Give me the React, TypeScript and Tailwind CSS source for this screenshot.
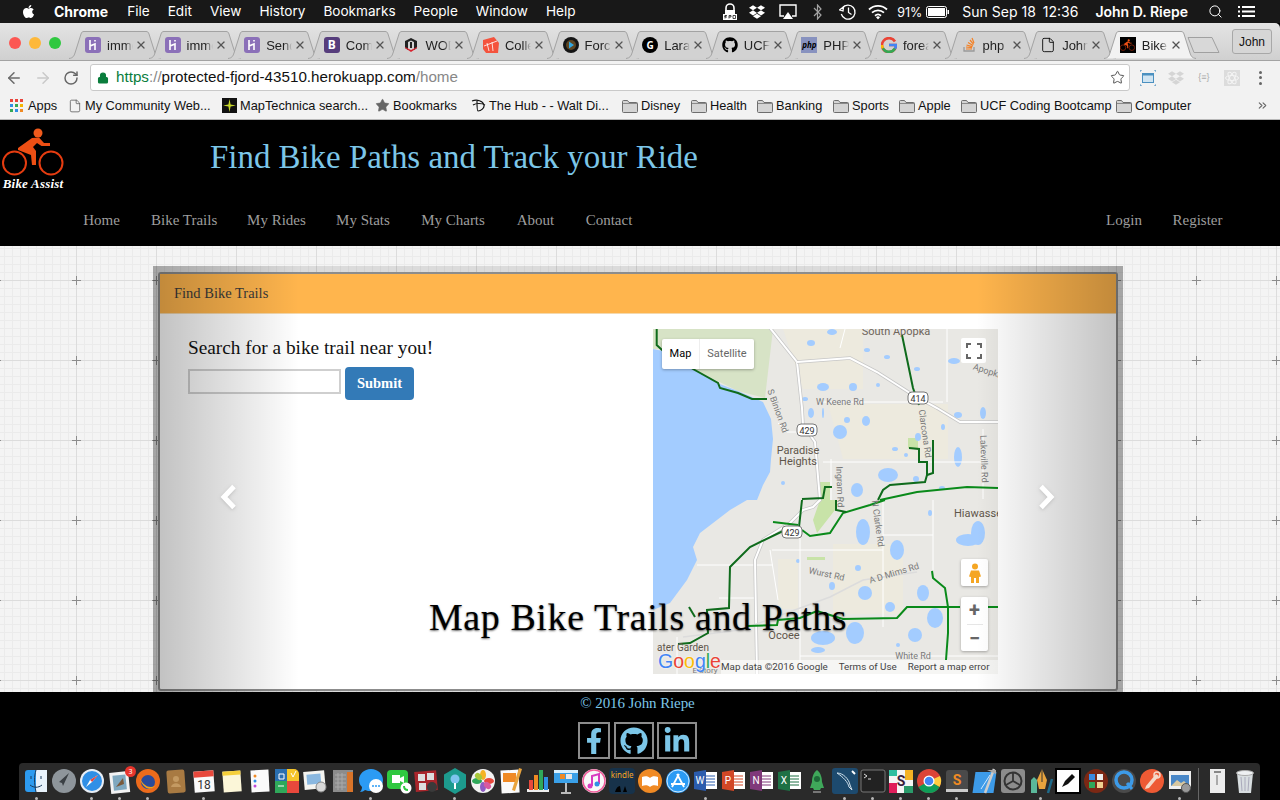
import React from "react";
import {
  ArrowLeft,
  ArrowRight,
  RotateCw,
  Lock,
  Star,
  Search,
  X,
  File,
  ChevronsRight,
} from "lucide-react";
import { FaFacebookF, FaGithub, FaLinkedinIn, FaApple, FaDropbox } from "react-icons/fa";

const Folder = () => (
  <svg width="16" height="14" viewBox="0 0 16 14" className="shrink-0">
    <path d="M.5 2.5a1 1 0 0 1 1-1h4l1.5 2h7.5a1 1 0 0 1 1 1v8a1 1 0 0 1-1 1h-13a1 1 0 0 1-1-1z" fill="#d4d4d4" stroke="#6e6e6e" />
    <path d="M1 4.5h14" stroke="#8a8a8a" />
  </svg>
);

const Heroku = () => (
  <svg width="16" height="16" viewBox="0 0 16 16">
    <rect width="16" height="16" rx="3" fill="#8b70b8" />
    <path d="M5 3v10M5 9l5-2v6M10 3v1.5" stroke="#fff" strokeWidth="1.6" fill="none" />
  </svg>
);

const BikeLogo = ({ w = 62, h = 48 }: { w?: number; h?: number }) => (
  <svg width={w} height={h} viewBox="0 0 62 48">
    <circle cx="12.5" cy="35" r="11.5" fill="none" stroke="#e63c10" strokeWidth="2" />
    <circle cx="49" cy="35" r="11.5" fill="none" stroke="#e63c10" strokeWidth="2" />
    <circle cx="36" cy="5" r="4.5" fill="#f05a1c" />
    <path d="M30 10 L37 9.5 L42 15 L48 15 L48 18 L39.5 18 L35 15 L31 19 L34 23 L34 37 L30 37 L29 27 L16 22 L16 20 Z" fill="#ee4f14" />
  </svg>
);

const favicons: React.ReactNode[] = [
  <Heroku />,
  <Heroku />,
  <Heroku />,
  <span className="flex h-4 w-4 items-center justify-center rounded-[3px] bg-[#563d7c] text-[12px] font-bold text-white">B</span>,
  <svg width="16" height="16" viewBox="0 0 16 16">
    <path d="M8 1l6 3v7l-3 2V5L8 3.5 5 5v8l-3-2V4z" fill="#222" />
    <path d="M2 11l3 2 3 2 3-2 3-2v-1l-6 3-6-3z" fill="#d8232f" />
    <path d="M7 5h2v6H7z" fill="#222" />
  </svg>,
  <svg width="16" height="16" viewBox="0 0 16 16">
    <path d="M0 3l11-3 5 6-1 10H3L0 12z" fill="#f4533d" />
    <path d="M1 9l13-5M6 14L4 6M10 14l-1-9" stroke="#fff" strokeWidth=".8" />
  </svg>,
  <svg width="16" height="16" viewBox="0 0 16 16">
    <circle cx="8" cy="8" r="8" fill="#151515" />
    <circle cx="8" cy="8" r="5" fill="#e8a33d" opacity=".35" />
    <path d="M6 4.5l5 3.5-5 3.5z" fill="#35a8e0" />
  </svg>,
  <span className="flex h-4 w-4 items-center justify-center rounded-full bg-black text-[10px] font-bold text-white">G</span>,
  <FaGithub className="h-4 w-4 text-black" />,
  <span className="flex h-4 w-4 items-center justify-center bg-[#8892bf] text-[8px] font-bold italic text-black">php</span>,
  <svg width="16" height="16" viewBox="0 0 16 16">
    <path d="M14 4.5A7 7 0 1 0 15 8H8" fill="none" stroke="#ea4335" strokeWidth="2.6" />
    <path d="M1.8 11.2A7 7 0 0 0 14 11.5" fill="none" stroke="#34a853" strokeWidth="2.6" />
    <path d="M8 8h7a7 7 0 0 1-1 3.5" fill="none" stroke="#4285f4" strokeWidth="2.6" />
    <path d="M1 8a7 7 0 0 0 .8 3.2" fill="none" stroke="#fbbc05" strokeWidth="2.6" />
  </svg>,
  <svg width="16" height="16" viewBox="0 0 16 16">
    <path d="M3 10v4h10v-4" fill="none" stroke="#9a9a9a" strokeWidth="1.3" />
    <path d="M5 12h6M5 10l6 .6M5.5 8l6 1.6M7 5.5l5 3M9 3l3.6 4.4M11 1l2 5" stroke="#f48024" strokeWidth="1.2" />
  </svg>,
  <File className="h-4 w-4 text-black" strokeWidth={1.3} />,
  <span className="flex h-4 w-4 items-center justify-center bg-black">
    <BikeLogo w={15} h={12} />
  </span>,
];

const tabs = ["imme", "imme", "Send", "Com", "WOD", "Colle", "Forc", "Lara", "UCF-", "PHP:", "forea", "php", "John", "Bike"];

const Tab = ({ label, icon, active }: { label: string; icon: React.ReactNode; active: boolean }) => (
  <div className="relative h-[28px] w-[79.6px] shrink-0">
    <svg width="92" height="28" viewBox="0 0 92 28" className={`absolute left-0 top-0 ${active ? "z-10" : ""}`}>
      <path
        d="M0 27.5 C4 27 5 25 6 22 L12 3 C12.6 1 13.5.5 15 .5 H77 C78.5.5 79.4 1 80 3 L86 22 C87 25 88 27 92 27.5"
        fill={active ? "#f2f2f2" : "#d2d2d2"}
        stroke="#a3a3a3"
      />
    </svg>
    <div className="absolute left-[16px] top-[6px] z-20 flex h-[16px] w-[16px] items-center justify-center">{icon}</div>
    <div className="absolute left-[38px] top-[6px] z-20 w-[26px] overflow-hidden whitespace-nowrap font-['Liberation_Sans',sans-serif] text-[13px] leading-[18px] text-[#222] [mask-image:linear-gradient(to_right,black_70%,transparent)]">
      {label}
    </div>
    <X className="absolute left-[66px] top-[8px] z-20 h-[12px] w-[12px] text-[#555]" strokeWidth={2.6} />
  </div>
);

const MenuBar = () => (
  <div className="flex h-[23px] shrink-0 items-center bg-[#181818] pl-[21px] font-['Inter',sans-serif] text-[14px] text-white">
    <FaApple className="mr-[18px] h-[15px] w-[15px]" />
    <span className="mr-[19px] font-bold">Chrome</span>
    <div className="flex gap-[18px] text-[13.6px]">
      <span>File</span>
      <span>Edit</span>
      <span>View</span>
      <span>History</span>
      <span>Bookmarks</span>
      <span>People</span>
      <span>Window</span>
      <span>Help</span>
    </div>
    <div className="ml-auto flex items-center pr-[25px]">
      <svg width="16" height="18" viewBox="0 0 16 18" className="mr-[11px]">
        <path d="M4 8V5a4 4 0 0 1 8 0v3" fill="none" stroke="#fff" strokeWidth="1.6" />
        <rect x="3" y="7" width="10" height="4" fill="#fff" />
        <rect x="1" y="11" width="14" height="6" fill="#fff" />
        <path d="M3 12.5v3M5 12.5h-2v1.5h2M7 15.5v-3h2v1.5H7M11 12.5h2.5v3H11z" stroke="#000" strokeWidth=".7" fill="none" />
      </svg>
      <FaDropbox className="mr-[14px] h-[16px] w-[16px]" />
      <svg width="18" height="16" viewBox="0 0 18 16" className="mr-[16px]">
        <path d="M5 12H1V1h16v11h-4" fill="none" stroke="#fff" strokeWidth="1.4" />
        <path d="M9 8l5 7H4z" fill="#fff" />
      </svg>
      <svg width="10" height="16" viewBox="0 0 10 16" className="mr-[16px] opacity-60">
        <path d="M1 4l7 7-3.5 4V1L8 5l-7 7" fill="none" stroke="#fff" strokeWidth="1.2" />
      </svg>
      <svg width="18" height="18" viewBox="0 0 18 18" className="mr-[11px]">
        <path d="M3.4 5A7 7 0 1 1 2.3 11" fill="none" stroke="#fff" strokeWidth="1.3" />
        <path d="M.5 7l3.5 1 .5-4zM9.5 4.5V9.5L12.5 11.5" fill="none" stroke="#fff" strokeWidth="1.3" />
      </svg>
      <svg width="20" height="16" viewBox="0 0 20 16" className="mr-[9px]">
        <path d="M1 5.5a13 13 0 0 1 18 0M4 8.7a9 9 0 0 1 12 0M7 11.7a4.6 4.6 0 0 1 6 0" fill="none" stroke="#fff" strokeWidth="1.8" />
        <path d="M10 15.5l-2-2.3a3 3 0 0 1 4 0z" fill="#fff" />
      </svg>
      <span className="mr-[4px] mt-[3px] text-[12.5px]">91%</span>
      <svg width="23" height="12" viewBox="0 0 23 12" className="mr-[13px]">
        <rect x=".5" y=".5" width="20" height="11" rx="2" fill="none" stroke="#fff" />
        <rect x="2" y="2" width="17" height="8" fill="#fff" />
        <rect x="21.5" y="4" width="1.5" height="4" fill="#fff" />
      </svg>
      <span className="mr-[7px]">Sun Sep 18</span>
      <span className="mr-[17px]">12:36</span>
      <span className="mr-[20px] font-semibold">John D. Riepe</span>
      <Search className="mr-[15px] h-[15px] w-[15px]" strokeWidth={1.6} />
      <svg width="17" height="13" viewBox="0 0 17 13">
        <path d="M0 2h2M4 2h13M0 6.5h2M4 6.5h13M0 11h2M4 11h13" stroke="#fff" strokeWidth="1.8" />
      </svg>
    </div>
  </div>
);

const TabStrip = () => (
  <div className="relative flex h-[37px] shrink-0 items-end rounded-tr-[5px] bg-gradient-to-b from-[#e4e4e4] to-[#d0d0d0] pl-[69px]">
    <div className="absolute left-[9px] top-[14px] flex gap-[8px]">
      <span className="h-[12px] w-[12px] rounded-full bg-[#fc5753]" />
      <span className="h-[12px] w-[12px] rounded-full bg-[#fdb83a]" />
      <span className="h-[12px] w-[12px] rounded-full bg-[#2fc840]" />
    </div>
    <div className="flex pb-[1px]">
      {tabs.map((t, i) => (
        <Tab key={i} label={t} icon={favicons[i]} active={i === tabs.length - 1} />
      ))}
    </div>
    <svg width="34" height="16" viewBox="0 0 34 16" className="mb-[7px] ml-[4px] shrink-0">
      <path d="M1 .5h24l7 15H7z" fill="#d8d8d8" stroke="#a0a0a0" />
    </svg>
    <div className="absolute right-[8px] top-[6px] flex h-[25px] w-[40px] items-center justify-center rounded-[3px] border border-[#a8a8a8] bg-[#d6d6d6] font-['Liberation_Sans',sans-serif] text-[12px] text-[#111]">
      John
    </div>
  </div>
);

const Toolbar = () => (
  <div className="flex h-[34px] shrink-0 items-center border-t border-[#a3a3a3] bg-[#f2f2f2] pl-[5px] font-['Liberation_Sans',sans-serif]">
    <ArrowLeft className="mr-[11px] h-[18px] w-[18px] text-[#6b6b6b]" strokeWidth={2} />
    <ArrowRight className="mr-[11px] h-[18px] w-[18px] text-[#c9c9c9]" strokeWidth={2} />
    <RotateCw className="mr-[11px] h-[16px] w-[16px] text-[#666]" strokeWidth={2.2} />
    <div className="flex h-[27px] w-[1040px] items-center rounded-[3px] border border-[#c9c9c9] bg-white pl-[6px] pr-[4px] text-[15.2px]">
      <Lock className="mr-[7px] h-[12px] w-[12px] text-[#0a7d3c]" fill="#0a7d3c" strokeWidth={2.2} />
      <span className="text-[#0a7d3c]">https</span>
      <span className="text-[#888]">://</span>
      <span className="text-[#111]">protected-fjord-43510.herokuapp.com</span>
      <span className="text-[#888]">/home</span>
      <Star className="ml-auto h-[15px] w-[15px] text-[#555]" strokeWidth={1.6} />
    </div>
    <div className="ml-[10px] flex items-center gap-[12px]">
      <svg width="16" height="16" viewBox="0 0 16 16">
        <rect x="2.5" y="3.5" width="11" height="9" fill="#cfe4f2" stroke="#4a90c0" />
        <rect x="3" y="3" width="10" height="2.5" fill="#4a90c0" />
        <path d="M0 2V0h2M14 0h2v2M0 14v2h2M14 16h2v-2" stroke="#4a90c0" fill="none" />
      </svg>
      <FaDropbox className="h-[16px] w-[16px] text-[#d5d5d5]" />
      <span className="w-[16px] text-center text-[9px] text-[#aaa]">{"{≡}"}</span>
      <span className="flex h-[16px] w-[16px] items-center justify-center bg-[#dcdcdc]">
        <svg width="14" height="14" viewBox="0 0 14 14" fill="none" stroke="#f4f4f4">
          <ellipse cx="7" cy="7" rx="6.5" ry="2.5" />
          <ellipse cx="7" cy="7" rx="6.5" ry="2.5" transform="rotate(60 7 7)" />
          <ellipse cx="7" cy="7" rx="6.5" ry="2.5" transform="rotate(120 7 7)" />
        </svg>
      </span>
      <span className="flex w-[16px] flex-col items-center gap-[2.5px]">
        <span className="h-[3px] w-[3px] rounded-full bg-[#666]" />
        <span className="h-[3px] w-[3px] rounded-full bg-[#666]" />
        <span className="h-[3px] w-[3px] rounded-full bg-[#666]" />
      </span>
    </div>
  </div>
);

const BookmarkItem = ({ icon, label, className }: { icon: React.ReactNode; label: string; className: string }) => (
  <div className={`flex shrink-0 items-center gap-[3px] whitespace-nowrap ${className}`}>
    {icon}
    <span>{label}</span>
  </div>
);

const appsGrid = [
  "bg-[#e8453c]", "bg-[#e8453c]", "bg-[#e8453c]",
  "bg-[#2f8fe6]", "bg-[#34a853]", "bg-[#f4b400]",
  "bg-[#34a853]", "bg-[#2f8fe6]", "bg-[#f08a24]",
];

const BookmarksBar = () => (
  <div className="flex h-[26px] shrink-0 items-center border-b border-[#b8b8b8] bg-[#f2f2f2] pb-[2px] pl-[10px] font-['Liberation_Sans',sans-serif] text-[12.8px] text-[#111]">
    <BookmarkItem
      className="w-[58px]"
      label="Apps"
      icon={
        <span className="mr-[2px] grid h-[13px] w-[13px] shrink-0 grid-cols-3 gap-[1.5px]">
          {appsGrid.map((c, i) => (
            <span key={i} className={c} />
          ))}
        </span>
      }
    />
    <BookmarkItem className="w-[154px]" label="My Community Web..." icon={<File className="h-[14px] w-[14px] text-[#555]" strokeWidth={1.3} />} />
    <BookmarkItem
      className="w-[153px]"
      label="MapTechnica search..."
      icon={
        <svg width="15" height="15" viewBox="0 0 14 14" className="shrink-0">
          <rect width="14" height="14" fill="#111" />
          <path d="M7 1l1 5 5 1-5 1-1 5-1-5-5-1 5-1z" fill="#c8d82a" />
        </svg>
      }
    />
    <BookmarkItem className="w-[96px]" label="Bookmarks" icon={<Star className="h-[15px] w-[15px] text-[#666]" fill="#666" strokeWidth={1} />} />
    <BookmarkItem
      className="w-[151px]"
      label="The Hub - - Walt Di..."
      icon={
        <svg width="15" height="14" viewBox="0 0 15 14" className="shrink-0" fill="none" stroke="#111" strokeWidth="1.2">
          <path d="M1 2c5-2 11 0 12 4 .6 3-3 6-6 6-1 0-1-7-1-10M2 6c3-2 9-2 12 0" />
        </svg>
      }
    />
    <BookmarkItem className="w-[69px]" label="Disney" icon={<Folder />} />
    <BookmarkItem className="w-[66px]" label="Health" icon={<Folder />} />
    <BookmarkItem className="w-[76px]" label="Banking" icon={<Folder />} />
    <BookmarkItem className="w-[66px]" label="Sports" icon={<Folder />} />
    <BookmarkItem className="w-[62px]" label="Apple" icon={<Folder />} />
    <BookmarkItem className="w-[155px]" label="UCF Coding Bootcamp" icon={<Folder />} />
    <BookmarkItem className="w-[140px]" label="Computer" icon={<Folder />} />
    <ChevronsRight className="h-[13px] w-[13px] text-[#666]" strokeWidth={2} />
  </div>
);

// cx, cy, rx, ry in map pixels, read off the zoomed reference
const lakes = [
  [179, 3, 5, 3], [158, 14, 4, 3], [214, 21, 3, 2], [234, 28, 3, 2], [264, 40, 3, 2], [301, 32, 6, 3], [170, 58, 6, 4], [200, 58, 4, 4],
  [225, 56, 2, 2], [152, 70, 3, 2], [158, 84, 3, 5], [170, 84, 1, 5], [187, 103, 7, 7], [213, 92, 4, 5], [194, 91, 3, 3], [242, 120, 3, 2],
  [253, 126, 2, 2], [265, 108, 3, 4], [305, 128, 4, 10], [305, 86, 4, 3], [330, 84, 3, 6], [290, 98, 2, 3], [235, 146, 10, 7], [204, 161, 6, 7],
  [263, 150, 3, 3], [289, 159, 3, 2], [130, 154, 2, 2], [210, 203, 7, 13], [244, 221, 7, 10], [277, 184, 2, 3], [315, 211, 12, 6], [325, 204, 7, 12],
  [270, 264, 6, 8], [212, 264, 7, 7], [237, 278, 5, 5], [179, 257, 3, 4], [282, 289, 8, 10], [262, 306, 7, 7], [202, 304, 9, 11], [170, 309, 12, 7],
  [165, 321, 7, 3], [205, 239, 3, 3], [245, 316, 2, 2], [145, 232, 2, 2],
];

const greens: [string, string][] = [
  ["M3.7 -1 L3.7 16 L9 21 L40 40 L65 54 L67 59 L85 64 L99 70 L114 70", "#0f6b1c"],
  ["M249 6 L260 59 L266 76", "#0f6b1c"],
  ["M280 111 L280 144 L274 146 L274 133 L266 133 L266 120 L256 119", "#0f6b1c"],
  ["M274 146 L272 153 L237 156 L230 161 L225 171", "#0f6b1c"],
  ["M227 171 L264 163 L314 158 L345 159", "#0a8a1a"],
  ["M149 170 L170 169 L172 158 L179 158", "#0f6b1c"],
  ["M149 171 L146 198 L130 202 L97 218 L77 238 L76 279 L54 281 L55 304 L37 314 L25 315", "#0f6b1c"],
  ["M36 278 L42 288", "#0f6b1c"],
  ["M120 193 L145 196", "#0a8a1a"],
  ["M149 201 L157 207 L177 204 L190 184 L217 176 L232 171", "#0a8a1a"],
  ["M183 171 L183 181 L193 183", "#0f6b1c"],
  ["M94 297 L124 296 L125 291 L147 289 L164 282 L177 286 L190 290 L244 289 L254 278 L307 278", "#0a8a1a"],
  ["M335 278 L345 278", "#0a8a1a"],
  ["M279 242 L280 249 L292 259 L295 278 L295 304 L293 331", "#0a8a1a"],
];

const Shield = ({ x, y, t }: { x: number; y: number; t: string }) => (
  <g>
    <rect x={x - 10} y={y - 6} width="20" height="12" rx="4" fill="#fff" stroke="#777" />
    <text x={x} y={y + 3.5} textAnchor="middle" fontSize="9" fill="#333" fontFamily="Roboto, sans-serif">
      {t}
    </text>
  </g>
);

const MapLabel = ({ x, y, t, s = 9, c = "#7a7a7a", r = 0 }: { x: number; y: number; t: string; s?: number; c?: string; r?: number }) => (
  <text x={x} y={y} fontSize={s} fill={c} textAnchor="middle" fontFamily="Roboto, sans-serif" transform={r ? `rotate(${r} ${x} ${y})` : undefined}>
    {t}
  </text>
);

const HIGHWAYS = [
  "M117 -1 L144 33 L149 79 L150 96 L162 113 L167 171 L160 178 L150 181 L137 194 L110 211 L102 231 L104 345",
  "M144 33 L197 29 L224 43 L260 66 L284 79 L307 93 L345 93",
];

const TrailMap = () => (
  <div className="relative h-[345px] w-[345px] shrink-0 overflow-hidden font-['Roboto',sans-serif]">
    <svg width="345" height="345" viewBox="0 0 345 345">
      <rect width="345" height="345" fill="#e9e8e4" />
      <path d="M130 0h80v60h-60zM175 75h120v55H190zM180 215h70v70h-70zM125 230h20v50h-20z" fill="#edeade" />
      <path d="M0 0H120L112 69 85 62 40 40 10 20H0z" fill="#d7e3c6" />
      <path d="M0 20 10 22 40 40 64 54 85 62 110 73 118 90 120 110 118 130 117 143 110 156 104 171 94 171 77 181 47 204 40 218 44 231 34 251 17 274 0 281z" fill="#a3ccff" />
      <path d="M167 153h10v18h7l-2 10-18 23-4-13 7-20zM154 228h18v3h-18zM255 109h10v10h-10z" fill="#c8e3a8" />
      {lakes.map(([x, y, rx, ry], i) => (
        <ellipse key={i} cx={x} cy={y} rx={rx} ry={ry} fill="#a3ccff" />
      ))}
      <g fill="none" stroke="#fff" strokeWidth="1">
        <path d="M294 0V73M164 73H290M170 133H330M44 236H120M66 269H104M119 221H230M230 206H280M280 171V241M230 171V298M147 204V338M147 327H345M24 308V345M117 221L125 271M125 94L134 103H144M187 19L192 0M178 130V171M330 100V170" />
      </g>
      <g fill="none">
        {HIGHWAYS.map((d) => (
          <g key={d}>
            <path d={d} stroke="#c6c6c6" strokeWidth="3.5" />
            <path d={d} stroke="#fff" strokeWidth="2" />
          </g>
        ))}
        <path d="M30 308 L87 301 L177 268 L210 251 L264 243" stroke="#dcdcdc" strokeWidth="1.5" />
      </g>
      {greens.map(([d, c], i) => (
        <path key={i} d={d} fill="none" stroke={c} strokeWidth="2" />
      ))}
      <MapLabel x={243} y={6} t="South Apopka" s={11} c="#6e655a" />
      <MapLabel x={187} y={76} t="W Keene Rd" />
      <MapLabel x={122} y={83} t="S Binion Rd" r={70} />
      <MapLabel x={269} y={105} t="Clarcona Rd" r={82} />
      <MapLabel x={328} y={130} t="Lakeville Rd" r={88} />
      <MapLabel x={334} y={45} t="Apopka" r={18} />
      <MapLabel x={145} y={125} t="Paradise" s={11} c="#5f564b" />
      <MapLabel x={145} y={136} t="Heights" s={11} c="#5f564b" />
      <MapLabel x={184} y={158} t="Ingram Rd" r={88} />
      <MapLabel x={222} y={195} t="N Clarke Rd" r={82} />
      <MapLabel x={325} y={188} t="Hiawasse" s={11} c="#5f564b" />
      <MapLabel x={173} y={248} t="Wurst Rd" r={12} />
      <MapLabel x={242} y={247} t="A D Mims Rd" r={-17} />
      <MapLabel x={131} y={310} t="Ocoee" s={11} c="#5f564b" />
      <MapLabel x={30} y={322} t="ater Garden" s={10} c="#5f564b" />
      <MapLabel x={260} y={330} t="White Rd" />
      <MapLabel x={52} y={344} t="E Story" s={8} />
      <Shield x={265} y={69} t="414" />
      <Shield x={154} y={101} t="429" />
      <Shield x={139} y={203} t="429" />
    </svg>

    {/* map controls */}
    <div className="absolute left-[9px] top-[10px] flex h-[30px] w-[92px] items-center rounded-[2px] bg-white text-[11px] shadow-[0_1px_3px_rgba(0,0,0,.3)]">
      <span className="flex h-full w-[38px] items-center justify-center border-r border-[#eee] text-black">Map</span>
      <span className="flex-1 text-center text-[#666]">Satellite</span>
    </div>
    <div className="absolute left-[308px] top-[9px] flex h-[25px] w-[25px] items-center justify-center rounded-[2px] bg-white">
      <svg width="16" height="16" viewBox="0 0 16 16" fill="none" stroke="#666" strokeWidth="2">
        <path d="M1 5V1h4M11 1h4v4M15 11v4h-4M5 15H1v-4" />
      </svg>
    </div>
    <div className="absolute left-[308px] top-[230px] flex h-[27px] w-[27px] items-center justify-center rounded-[2px] bg-white shadow-[0_1px_3px_rgba(0,0,0,.3)]">
      <svg width="12" height="20" viewBox="0 0 12 20">
        <circle cx="6" cy="3.5" r="3" fill="#f5a623" />
        <path d="M2 7.5h8l2 6-2 .5v6H7v-5H5v5H2v-6l-2-.5z" fill="#f5a623" />
      </svg>
    </div>
    <div className="absolute left-[308px] top-[268px] flex h-[54px] w-[27px] flex-col items-center rounded-[2px] bg-white text-[20px] font-bold leading-[26px] text-[#666] shadow-[0_1px_3px_rgba(0,0,0,.3)]">
      <span className="h-[27px]">+</span>
      <span className="h-px w-[16px] bg-[#e6e6e6]" />
      <span className="h-[26px]">−</span>
    </div>
    <div className="absolute bottom-0 right-0 flex h-[14px] w-[277px] items-center gap-[11px] whitespace-nowrap bg-white/60 text-[9.8px] leading-none text-[#444]">
      <span>Map data ©2016 Google</span>
      <span>Terms of Use</span>
      <span>Report a map error</span>
    </div>
    <div className="absolute bottom-[2px] left-[5px] font-['Liberation_Sans',sans-serif] text-[19.5px] leading-[22px] [text-shadow:0_0_2px_#fff]">
      <span className="text-[#4285f4]">G</span>
      <span className="text-[#ea4335]">o</span>
      <span className="text-[#fbbc05]">o</span>
      <span className="text-[#4285f4]">g</span>
      <span className="text-[#34a853]">l</span>
      <span className="text-[#ea4335]">e</span>
    </div>
  </div>
);

const Carousel = () => (
  <div className="relative ml-[153px] mt-[20px] h-[426px] w-[970px] bg-black/10 px-[5px] pt-[6px] font-['Liberation_Serif',serif]">
    <div className="flex h-[419px] flex-col rounded-[3px] border-2 border-[#8c8c8c] bg-white">
      <div className="flex h-[40px] shrink-0 items-center border-b border-[#f5d9ad] bg-[#ffb54d] pl-[14px] text-[14.5px] text-[#3a3a3a]">
        Find Bike Trails
      </div>
      <div className="flex flex-1 pl-[28px] pt-[15px]">
        <div className="w-[465px] shrink-0">
          <div className="mt-[7px] text-[19.3px] leading-[24px] text-[#111]">Search for a bike trail near you!</div>
          <div className="mt-[7px] flex items-start">
            <input className="mt-[2px] h-[25px] w-[153px] border-2 border-[#cfcfcf] bg-white" aria-label="Search" />
            <button className="ml-[4px] h-[33px] w-[69px] rounded-[4px] bg-[#337ab7] text-[14.5px] font-bold text-white">Submit</button>
          </div>
        </div>
        <TrailMap />
      </div>
    </div>

    {/* carousel controls */}
    <div className="absolute inset-y-0 left-0 flex w-[146px] items-center justify-center bg-gradient-to-r from-black/25 to-transparent pl-[5px]">
      <svg width="20" height="26" viewBox="0 0 20 26" className="mt-[35px] drop-shadow">
        <path d="M15 2.5 L5 13 L15 23.5" fill="none" stroke="#fff" strokeWidth="5" />
      </svg>
    </div>
    <div className="absolute inset-y-0 right-0 flex w-[146px] items-center justify-center bg-gradient-to-l from-black/25 to-transparent pr-[8px]">
      <svg width="20" height="26" viewBox="0 0 20 26" className="mt-[35px] drop-shadow">
        <path d="M5 2.5 L15 13 L5 23.5" fill="none" stroke="#fff" strokeWidth="5" />
      </svg>
    </div>
    <div className="absolute inset-x-0 top-[328px] text-center text-[38px] leading-[46px] tracking-[.6px] text-black [text-shadow:0_1px_2px_rgba(0,0,0,.6)]">
      Map Bike Trails and Paths
    </div>
  </div>
);

const GridBackdrop = () => (
  <svg className="absolute inset-0 h-full w-full" aria-hidden="true">
    <defs>
      <pattern id="sitegrid" x="36" y="-6" width="80" height="80" patternUnits="userSpaceOnUse">
        <rect width="80" height="80" fill="#f4f4f4" />
        <path
          d="M.5 0V80M8.5 0V80M16.5 0V80M24.5 0V80M32.5 0V80M48.5 0V80M56.5 0V80M64.5 0V80M72.5 0V80M0 .5H80M0 8.5H80M0 16.5H80M0 24.5H80M0 32.5H80M0 48.5H80M0 56.5H80M0 64.5H80M0 72.5H80"
          stroke="#ebebeb"
        />
        <path d="M40.5 0V80M0 40.5H80" stroke="#dcdcdc" />
        <path d="M36 40.5H45M40.5 36V45" stroke="#8c8c8c" />
      </pattern>
    </defs>
    <rect width="100%" height="100%" fill="url(#sitegrid)" />
  </svg>
);

const SiteHeader = () => (
  <header className="h-[126px] shrink-0 bg-black font-['Liberation_Serif',serif]">
    <div className="flex h-[80px] items-start">
      <div className="ml-[2px] mt-[8px] w-[62px]">
        <BikeLogo />
        <div className="mt-[1px] whitespace-nowrap text-center text-[13px] font-bold italic leading-[14px] tracking-[.2px] text-white">Bike Assist</div>
      </div>
      <h1 className="ml-[146px] mt-[17px] whitespace-nowrap text-[32.9px] leading-[40px] text-[#7cc6e8]">Find Bike Paths and Track your Ride</h1>
    </div>
    <nav className="flex h-[46px] items-center whitespace-nowrap pb-[6px] pl-[82px] pr-[57px] text-[15px] text-[#9d9d9d]">
      <div className="flex gap-[30px] text-center">
        <span className="w-[39px]">Home</span>
        <span className="w-[66px]">Bike Trails</span>
        <span className="w-[59px]">My Rides</span>
        <span className="w-[54px]">My Stats</span>
        <span className="w-[66px]">My Charts</span>
        <span className="w-[39px]">About</span>
        <span className="w-[48px]">Contact</span>
      </div>
      <div className="ml-auto flex gap-[30px] text-center">
        <span className="w-[36px]">Login</span>
        <span className="w-[51px]">Register</span>
      </div>
    </nav>
  </header>
);

const SocialBox = ({ className, children }: { className: string; children: React.ReactNode }) => (
  <div className={`flex h-[37px] items-center justify-center border-2 border-[#8c8c8c] text-[#7cc6e8] ${className}`}>{children}</div>
);

const SiteFooter = () => (
  <footer className="flex h-[108px] shrink-0 flex-col items-center bg-black pr-[5px] font-['Liberation_Serif',serif]">
    <div className="mt-[1px] text-[15px] leading-[20px] tracking-[-.1px] text-[#7cc6e8]">© 2016 John Riepe</div>
    <div className="mt-[9px] flex gap-[3.5px]">
      <SocialBox className="w-[32px]">
        <FaFacebookF className="h-[26px] w-[26px]" />
      </SocialBox>
      <SocialBox className="w-[40px]">
        <FaGithub className="h-[28px] w-[28px]" />
      </SocialBox>
      <SocialBox className="w-[40px]">
        <FaLinkedinIn className="h-[28px] w-[28px]" />
      </SocialBox>
    </div>
  </footer>
);

const OfficeTile = ({ bg, letter }: { bg: string; letter: string }) => (
  <svg width="25" height="25" viewBox="0 0 25 25">
    <rect x="9" y="4" width="15" height="17" fill="#fff" />
    <path d="M13 8h9M13 11h9M13 14h9M13 17h9" stroke={bg} strokeWidth="1" />
    <path d="M1 4l12-2v21L1 21z" fill={bg} />
    <text x="7" y="16" textAnchor="middle" fontSize="10" fill="#fff" fontFamily="Roboto, sans-serif">
      {letter}
    </text>
  </svg>
);

const s = (children: React.ReactNode) => (
  <svg width="26" height="26" viewBox="0 0 26 26">
    {children}
  </svg>
);

const dockIcons: { icon: React.ReactNode; dot?: boolean }[] = [
  { dot: true, icon: s(<><rect x="2" y="2" width="22" height="22" rx="3" fill="#2d9bf0" /><path d="M13 2h11v22H13z" fill="#e8f2fb" /><path d="M13 2c-2 7-2 12 0 22" stroke="#1a3a5c" fill="none" /><path d="M8 8v3M18 8v3M7 17c4 3 8 3 12 0" stroke="#1a3a5c" fill="none" /></>) },
  { icon: s(<><circle cx="13" cy="13" r="12" fill="#8e959b" /><path d="M18 5L8 14l3 1 1 3z" fill="#3a3f44" /></>) },
  { dot: true, icon: s(<><circle cx="13" cy="13" r="12" fill="#e8eef5" /><circle cx="13" cy="13" r="10" fill="#2f8fe6" /><path d="M19 7l-8 5 2 2z" fill="#fff" /><path d="M19 7l-6 7-2-2z" fill="#e8453c" /><path d="M7 19l6-5-2-2z" fill="#fff" /></>) },
  { dot: true, icon: <div className="relative">{s(<><rect x="3" y="4" width="19" height="21" transform="rotate(-6 13 13)" fill="#f2f2f2" /><rect x="6" y="7" width="13" height="15" transform="rotate(-6 13 13)" fill="#7fa8bf" /><path d="M9 19l7-9 1 6z" fill="#7a5a3c" /></>)}<span className="absolute -right-[3px] -top-[2px] flex h-[11px] w-[11px] items-center justify-center rounded-full bg-[#e8352c] text-[7px] leading-none text-white">3</span></div> },
  { dot: true, icon: s(<><circle cx="13" cy="13" r="12" fill="#ec6b1c" /><circle cx="13" cy="14" r="7" fill="#2a4a9a" /><path d="M4 8c2 6 6 11 12 11 4 0 6-3 7-6-2 8-14 14-19-5z" fill="#f4a21a" /></>) },
  { icon: s(<><rect x="4" y="2" width="18" height="23" rx="2" transform="rotate(-4 13 13)" fill="#a87a42" /><circle cx="13" cy="11" r="3" fill="#c49a62" /><path d="M8 19c1-5 9-5 10 0z" fill="#c49a62" /></>) },
  { dot: true, icon: s(<><rect x="3" y="3" width="20" height="21" transform="rotate(-4 13 13)" fill="#fafafa" /><rect x="3" y="3" width="20" height="6" transform="rotate(-4 13 13)" fill="#e8483c" /><text x="13" y="21" textAnchor="middle" fontSize="12" fill="#333" fontFamily="Roboto, sans-serif">18</text></>) },
  { icon: s(<><rect x="4" y="3" width="18" height="21" transform="rotate(-4 13 13)" fill="#fbf6d8" /><rect x="4" y="3" width="18" height="4" transform="rotate(-4 13 13)" fill="#f5cf3a" /></>) },
  { icon: s(<><rect x="4" y="2" width="18" height="22" transform="rotate(-3 13 13)" fill="#fafafa" /><circle cx="8" cy="8" r="1.5" fill="#f08a24" /><circle cx="8" cy="13" r="1.5" fill="#2f8fe6" /><circle cx="8" cy="18" r="1.5" fill="#c04ad8" /></>) },
  { icon: s(<><rect x="1" y="1" width="24" height="24" rx="5" fill="#f5c52a" /><path d="M1 1h12v12H1z" fill="#2a6fb0" /><path d="M1 13h12v12H1z" fill="#2fa85a" /><path d="M13 13h12v12H13z" fill="#e8483c" /><path d="M5 6h5v5H5zM4 18h6" stroke="#fff" fill="none" /><path d="M17 5l2 4 3-6" stroke="#fff" fill="none" /></>) },
  { icon: s(<><rect x="2" y="3" width="21" height="18" transform="rotate(-5 13 13)" fill="#f4f4f0" /><rect x="5" y="6" width="14" height="10" transform="rotate(-5 13 13)" fill="#8ab8e0" /><circle cx="19" cy="19" r="5" fill="#d8d8d8" stroke="#888" /></>) },
  { icon: s(<><rect x="3" y="2" width="20" height="22" fill="#8c8c8c" /><rect x="17" y="4" width="6" height="20" fill="#d8742a" /><path d="M5 7h11M5 11h11M5 15h11M5 19h11M8 5v17M12 5v17" stroke="#aaa" /></>) },
  { dot: true, icon: s(<><path d="M13 1c7 0 12 5 12 11s-5 11-12 11c-2 0-4 0-6-1-1 1-3 2-5 2 1-1 2-3 2-5-2-2-3-4-3-7C1 6 6 1 13 1z" fill="#2b9bf4" /><circle cx="18" cy="18" r="7" fill="#fff" /><circle cx="15" cy="18" r="1" fill="#2b9bf4" /><circle cx="18" cy="18" r="1" fill="#2b9bf4" /><circle cx="21" cy="18" r="1" fill="#2b9bf4" /></>) },
  { icon: s(<><rect x="1" y="2" width="21" height="19" rx="4" fill="#2fc840" /><path d="M6 7h8v8H6zM14 10l4-2v7l-4-2z" fill="#fff" /><circle cx="20" cy="20" r="5.5" fill="#fff" /><path d="M18 18c0 3 2 4 4 4" stroke="#2fc840" strokeWidth="2" fill="none" /></>) },
  { icon: s(<><rect x="1" y="3" width="22" height="20" transform="rotate(-5 13 13)" fill="#a8262c" /><rect x="4" y="6" width="7" height="7" fill="#ddd" /><rect x="13" y="5" width="7" height="7" fill="#ddd" /><rect x="5" y="15" width="7" height="7" fill="#ddd" /><circle cx="18" cy="19" r="5" fill="#3a3a3a" /></>) },
  { dot: true, icon: s(<><path d="M13 0l11 6.5v13L13 26 2 19.5v-13z" fill="#1d9b8e" /><circle cx="13" cy="11" r="4.5" fill="#7ec4ee" /><path d="M13 15v6" stroke="#fff" strokeWidth="2" /></>) },
  { icon: s(<><circle cx="13" cy="13" r="12" fill="#f2f2f2" /><ellipse cx="13" cy="7" rx="3" ry="5" fill="#f5b324" /><ellipse cx="13" cy="19" rx="3" ry="5" fill="#8f5cc4" /><ellipse cx="7" cy="13" rx="5" ry="3" fill="#2fa85a" /><ellipse cx="19" cy="13" rx="5" ry="3" fill="#e8483c" /><ellipse cx="8.5" cy="8.5" rx="3" ry="4" transform="rotate(-45 8.5 8.5)" fill="#a8c83a" /><ellipse cx="17.5" cy="17.5" rx="3" ry="4" transform="rotate(-45 17.5 17.5)" fill="#d85aa0" /></>) },
  { icon: s(<><rect x="3" y="2" width="18" height="23" transform="rotate(-3 13 13)" fill="#fafafa" /><rect x="5" y="5" width="13" height="9" fill="#f08a24" /><path d="M21 0l3 1-7 22-3-1z" fill="#e8a33d" /></>) },
  { icon: s(<><rect x="2" y="21" width="22" height="3" fill="#eee" /><rect x="4" y="12" width="4" height="10" fill="#e8483c" /><rect x="9" y="7" width="4" height="15" fill="#f08a24" /><rect x="14" y="2" width="4" height="20" fill="#2fa85a" /><rect x="19" y="9" width="4" height="13" fill="#2f8fe6" /></>) },
  { icon: s(<><rect x="1" y="2" width="24" height="13" fill="#3aa0e8" /><rect x="1" y="2" width="24" height="3" fill="#d8f0ff" /><rect x="7" y="6" width="5" height="5" fill="#f08a24" /><rect x="13" y="6" width="6" height="5" fill="#e8e8e8" /><path d="M13 15v9M8 25h10" stroke="#bbb" strokeWidth="2" /></>) },
  { icon: s(<><circle cx="13" cy="13" r="12" fill="#f8f8f8" /><circle cx="13" cy="13" r="11" fill="none" stroke="#f05a9a" strokeWidth="1.5" /><path d="M11 18V8l7-2v10" stroke="#d83ac0" strokeWidth="2" fill="none" /><circle cx="9" cy="18" r="2.5" fill="#d83ac0" /><circle cx="16" cy="16" r="2.5" fill="#2f8fe6" /></>) },
  { icon: <div className="flex h-[26px] w-[26px] flex-col items-center rounded-[4px] bg-[#17324a] text-[8px] leading-[14px] text-[#f5a623]">kindle<svg width="18" height="10" viewBox="0 0 18 10"><path d="M2 10c1-4 3-6 5-6l1 6zM10 10l2-6 2 6z" fill="#000" /></svg></div> },
  { icon: s(<><circle cx="13" cy="13" r="12" fill="#f08a24" /><path d="M5 9c3-1 6-1 8 1 2-2 5-2 8-1v9c-3-1-6-1-8 1-2-2-5-2-8-1z" fill="#fff" /></>) },
  { icon: s(<><circle cx="13" cy="13" r="12" fill="#2b9bf4" /><circle cx="13" cy="13" r="11" fill="none" stroke="#cfe8ff" /><path d="M7 19L14 6M19 19L12 6M6 16h14" stroke="#fff" strokeWidth="1.8" fill="none" /></>) },
  { dot: true, icon: <OfficeTile bg="#2b5cad" letter="W" /> },
  { icon: <OfficeTile bg="#d24726" letter="P" /> },
  { icon: <OfficeTile bg="#80397b" letter="N" /> },
  { icon: <OfficeTile bg="#1e7145" letter="X" /> },
  { icon: s(<><path d="M13 2c4 3 5 8 5 12l2 6h-3l-1 2H10l-1-2H6l2-6c0-4 1-9 5-12z" fill="#3fa85a" /><circle cx="13" cy="11" r="3" fill="#1d6a38" /><path d="M9 24h8" stroke="#777" strokeWidth="2" /></>) },
  { dot: true, icon: s(<><rect x="0" y="0" width="26" height="26" rx="3" fill="#1d4a6e" /><path d="M5 5c6 0 12 6 13 12l2 5-3-3c-1-5-6-10-12-14z" fill="none" stroke="#cfe0ec" /><path d="M20 3l3 3" stroke="#fff" strokeWidth="2" /></>) },
  { dot: true, icon: s(<><rect x="1" y="2" width="24" height="22" rx="2" fill="#222" stroke="#777" /><path d="M4 6l3 2-3 2M8 11h3" stroke="#ddd" fill="none" /></>) },
  { dot: true, icon: s(<><rect x="1" y="2" width="24" height="23" fill="#f5f5f5" /><path d="M1 2h8v6H1z" fill="#2fbfa0" /><path d="M17 2h8v10h-8z" fill="#f5b324" /><path d="M1 15h8v10H1z" fill="#e01e5a" /><path d="M16 18h9v7h-9z" fill="#2a9a6a" /><text x="13" y="18" textAnchor="middle" fontSize="14" fontWeight="bold" fill="#3a1d3a" fontFamily="Roboto, sans-serif">S</text></>) },
  { dot: true, icon: s(<><circle cx="13" cy="13" r="12" fill="#db4437" /><path d="M13 13L24 8A12 12 0 0 1 23.5 19z" fill="#ffcd40" /><path d="M13 25a12 12 0 0 1-10.5-6L13 13l10.5 6A12 12 0 0 1 13 25z" fill="#0f9d58" /><circle cx="13" cy="13" r="5.5" fill="#fff" /><circle cx="13" cy="13" r="4.3" fill="#4285f4" /></>) },
  { dot: true, icon: s(<><rect x="2" y="2" width="22" height="21" rx="3" fill="#4a4a4a" /><rect x="2" y="21" width="22" height="3" fill="#ccc" /><text x="13" y="17" textAnchor="middle" fontSize="14" fontWeight="bold" fill="#f08a24" fontFamily="Roboto, sans-serif">S</text></>) },
  { icon: s(<><rect x="1" y="4" width="21" height="21" transform="skewX(-8) translate(3 0)" fill="#3d9be8" /><path d="M9 21L18 7" stroke="#cfe8ff" /><path d="M22 1l-9 24" stroke="#ccc" strokeWidth="2.5" /><path d="M15 2l9 0 0 4z" fill="#aaa" /></>) },
  { icon: s(<><rect x="1" y="1" width="24" height="24" rx="3" fill="#8c8c8c" /><circle cx="13" cy="13" r="8.5" fill="none" stroke="#333" strokeWidth="2" /><path d="M13 13V5M13 13l7 4M13 13l-7 4" stroke="#333" strokeWidth="1.8" /></>) },
  { dot: true, icon: s(<><path d="M3 25V12l3-3 3 3v13z" fill="#5bb89a" /><path d="M14 1l5 11-2 9h-6l-2-9z" fill="#e8a33d" /><path d="M14 1v13" stroke="#333" /><path d="M20 25l4-14" stroke="#1e6a8a" strokeWidth="2.5" /></>) },
  { icon: s(<><rect x="1" y="1" width="24" height="24" fill="#fff" stroke="#000" strokeWidth="2" /><path d="M7 19l3-6 7-7 3 3-7 7z" fill="#111" /></>) },
  { icon: s(<><circle cx="13" cy="13" r="12" fill="#7c2814" /><rect x="6" y="6" width="6" height="6" fill="#3a8ae0" /><rect x="14" y="6" width="6" height="6" fill="#eee" /><rect x="6" y="14" width="6" height="6" fill="#2fa85a" /><rect x="14" y="14" width="6" height="6" fill="#f0d090" /></>) },
  { icon: s(<><circle cx="13" cy="13" r="12" fill="#4a4a4a" /><circle cx="13" cy="12" r="8" fill="none" stroke="#3d9be8" strokeWidth="3.5" /><path d="M16 15l5 6" stroke="#3d9be8" strokeWidth="3" /></>) },
  { icon: s(<><circle cx="13" cy="13" r="12" fill="#ee5a34" /><path d="M6 21l4-1 10-12-3-2L7 18z" fill="#f4d9c8" /><circle cx="18" cy="7" r="3" fill="none" stroke="#f4d9c8" strokeWidth="1.5" /></>) },
  { dot: true, icon: s(<><rect x="2" y="3" width="22" height="18" fill="#f0f0f0" /><rect x="4" y="7" width="18" height="11" fill="#4a88c8" /><path d="M4 18l6-6 4 3 3-2 5 5z" fill="#d8c8a0" /><circle cx="19" cy="20" r="4.5" fill="#9a9a9a" stroke="#555" /></>) },
];

const Dock = () => (
  <div className="absolute bottom-0 left-[19px] flex h-[37px] w-[1241px] items-start rounded-t-[4px] bg-[#2a2a2a] pl-[3.5px] pt-[5px]">
    {dockIcons.map((d, i) => (
      <div key={i} className="relative flex h-[32px] w-[27.9px] shrink-0 justify-center">
        {d.icon}
        {d.dot && <span className="absolute bottom-0 left-[12px] h-[3px] w-[3px] rounded-full bg-[#b8b8b8]" />}
      </div>
    ))}
    <div className="mx-[4px] h-[32px] w-px shrink-0 bg-[#666]" />
    <div className="flex w-[27.9px] shrink-0 justify-center">
      {s(<><rect x="6" y="1" width="15" height="24" fill="#ececec" /><rect x="10" y="3" width="7" height="2" fill="#888" /><path d="M12 7h2v10h-2z" fill="#aaa" /></>)}
    </div>
    <div className="flex w-[27.9px] shrink-0 justify-center">
      {s(<><path d="M5 5h16l-2 20H7z" fill="#d8dde0" /><ellipse cx="13" cy="5" rx="8.5" ry="2.5" fill="#eef0f2" stroke="#aaa" /><path d="M9 9l1 14M13 9v14M17 9l-1 14" stroke="#aab" /></>)}
    </div>
  </div>
);

export default function App() {
  return (
    <div className="relative flex h-[800px] w-[1280px] flex-col overflow-hidden bg-black">
      <MenuBar />
      <TabStrip />
      <Toolbar />
      <BookmarksBar />
      <SiteHeader />
      <main className="relative h-[446px] shrink-0 overflow-hidden">
        <GridBackdrop />
        <Carousel />
      </main>
      <SiteFooter />
      <Dock />
    </div>
  );
}
